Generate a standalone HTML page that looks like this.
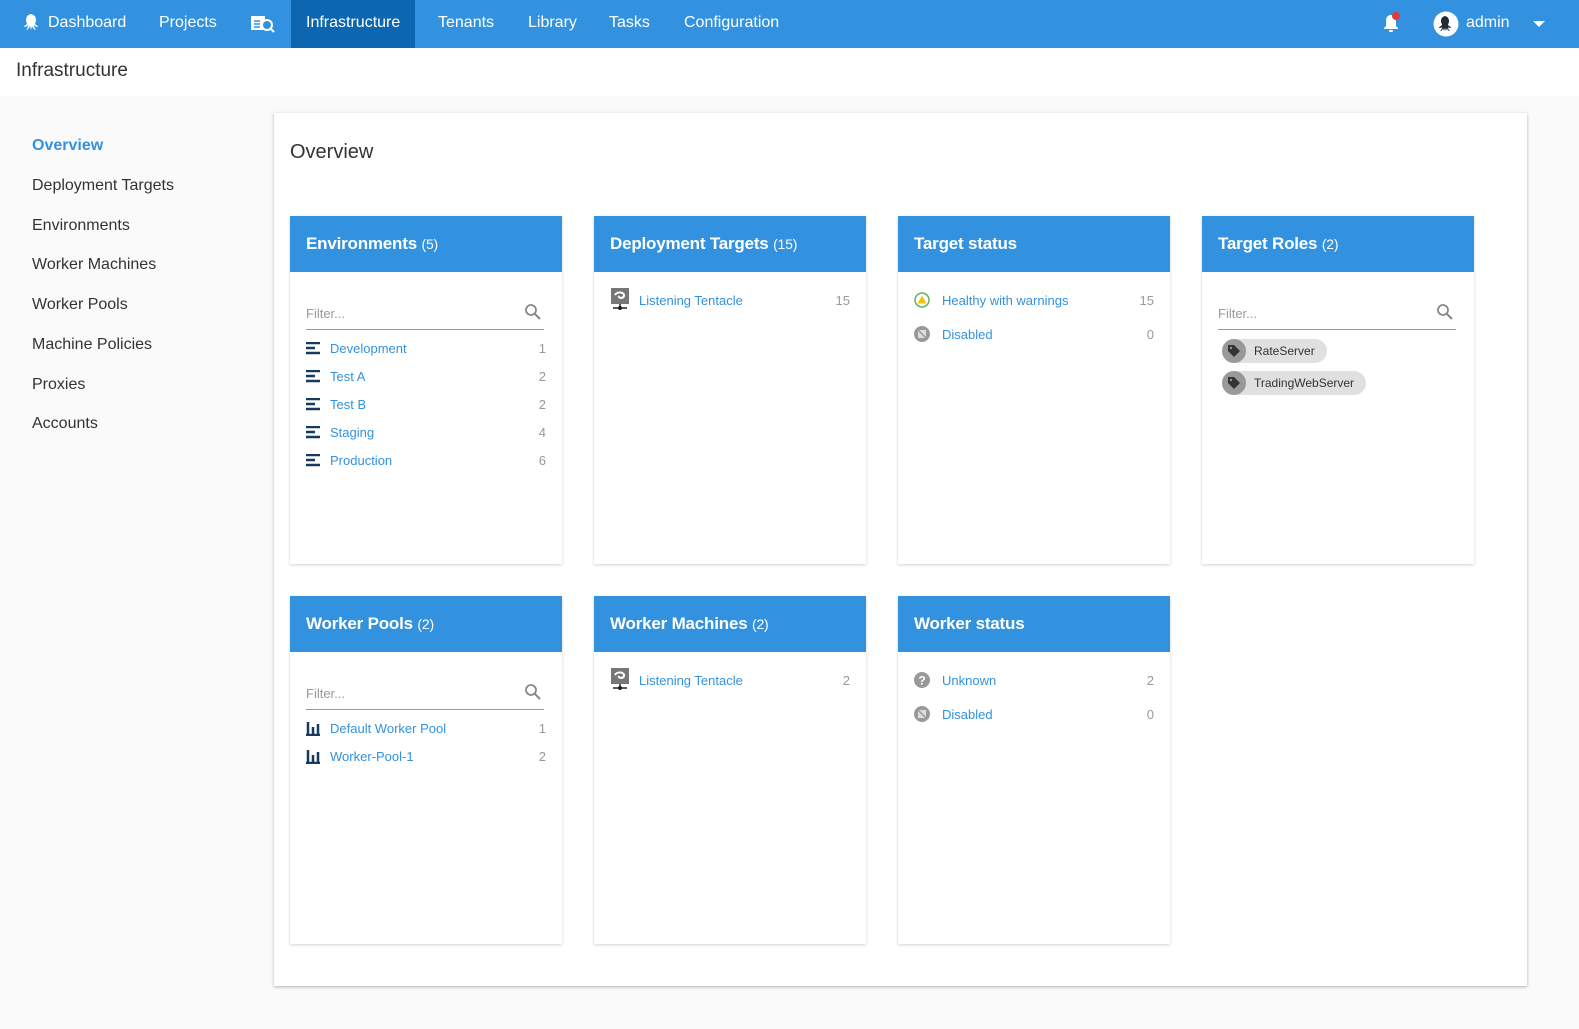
<!DOCTYPE html>
<html><head><meta charset="utf-8"><style>
*{box-sizing:border-box;margin:0;padding:0}
body{width:1579px;height:1029px;background:#fafafa;font-family:"Liberation Sans",sans-serif;position:relative;overflow:hidden}
.nav{position:absolute;left:0;top:0;width:1579px;height:48px;background:#3292df}
.nav span{position:absolute;top:0;height:48px;line-height:46px;color:#fff;font-size:16px}
.act{background:#0d67b0;padding:0 15px}
.hdr{position:absolute;left:0;top:48px;width:1579px;height:48px;background:#fff}
.hdr div{position:absolute;left:16px;top:12px;font-size:19px;color:#333}
.side{position:absolute;left:32px;font-size:16px;color:#333}
.main{position:absolute;left:274px;top:113px;width:1253px;height:873px;background:#fff;box-shadow:0 1px 3px rgba(0,0,0,.3)}
.card{position:absolute;width:272px;height:348px;background:#fff;box-shadow:0 1px 3px rgba(0,0,0,.18)}
.ch{height:56px;background:#3292df;color:#fff;font-size:17px;padding:18px 16px 0;font-weight:bold;letter-spacing:-0.2px}
.ch small{font-size:14px;font-weight:normal}
.filter{position:absolute;left:16px;top:84px;width:238px;height:30px;border-bottom:1px solid #999;color:#999;font-size:13px}
.filter svg{position:absolute;right:2px;top:3px}
.row{position:absolute;left:16px;width:240px;font-size:13px;color:#3292df;height:18px;line-height:18px}
.row .n{position:absolute;right:0;top:0;color:#999}
.row .t{position:absolute;left:24px}
.ic{position:absolute;left:0;top:2px}
.chip{position:absolute;left:20px;height:24px;background:#e0e0e0;border-radius:12px;font-size:12px;color:#333;line-height:24px;padding:0 12px 0 32px}
.chip i{position:absolute;left:0;top:0;width:24px;height:24px;border-radius:12px;background:#999}
.chip svg{position:absolute;left:5px;top:5px}
</style></head><body>
<div class="nav">
<svg style="position:absolute;left:24px;top:14px" width="16" height="18" viewBox="0 0 16 18"><path d="M8 0C4 0 2 3 2 6c0 2 1 3 1 4-1 1-3 2-3 3 2 0 3-1 4-2 0 2-1 4-2 5 2 0 3-2 4-4l1 4 1-4c1 2 2 4 4 4-1-1-2-3-2-5 1 1 2 2 4 2 0-1-2-2-3-3 0-1 1-2 1-4 0-3-2-6-6-6z" fill="#fff"/></svg>
<span style="left:48px">Dashboard</span>
<span style="left:159px">Projects</span>
<svg style="position:absolute;left:251px;top:15px" width="24" height="18" viewBox="0 0 24 18"><rect x="0" y="1" width="14" height="14" fill="#fff"/><circle cx="16" cy="10" r="5" fill="#3292df" stroke="#fff" stroke-width="2"/><path d="M19 13l4 4" stroke="#fff" stroke-width="2"/><path d="M3 6h6M3 9h6M3 12h6" stroke="#3292df" stroke-width="1.5"/></svg>
<span class="act" style="left:291px">Infrastructure</span>
<span style="left:438px">Tenants</span>
<span style="left:528px">Library</span>
<span style="left:609px">Tasks</span>
<span style="left:684px">Configuration</span>
<svg style="position:absolute;left:1381px;top:12px" width="22" height="22" viewBox="0 0 22 22"><path d="M9 3c-3 1-4 3-4 6v5l-2 2v1h14v-1l-2-2V9c0-3-1-5-4-6z" fill="#fff"/><rect x="8" y="18" width="4" height="2" rx="1" fill="#fff"/><circle cx="15" cy="4" r="4" fill="#e53935"/></svg>
<svg style="position:absolute;left:1433px;top:11px" width="26" height="26" viewBox="0 0 26 26"><circle cx="13" cy="13" r="12.5" fill="#fff"/><path d="M13 5c-3 0-5 2-5 5 0 2 1 3 1 4-1 1-3 2-3 3 1 0 2 0 3-1 0 2-1 3-2 4 2 0 3-2 3-3l1 3 1-3 1 3 1-3c0 1 1 3 3 3-1-1-2-2-2-4 1 1 2 1 3 1 0-1-2-2-3-3 0-1 1-2 1-4 0-3-2-5-5-5z" fill="#1e2b38"/></svg>
<span style="left:1466px">admin</span>
<svg style="position:absolute;left:1533px;top:21px" width="12" height="7"><path d="M0 0h12L6 6z" fill="#fff"/></svg>
</div>
<div class="hdr"><div>Infrastructure</div></div>
<div class="side" style="top:137px;color:#3292df;font-weight:bold">Overview</div>
<div class="side" style="top:177px">Deployment Targets</div>
<div class="side" style="top:217px">Environments</div>
<div class="side" style="top:256px">Worker Machines</div>
<div class="side" style="top:296px">Worker Pools</div>
<div class="side" style="top:336px">Machine Policies</div>
<div class="side" style="top:376px">Proxies</div>
<div class="side" style="top:415px">Accounts</div>
<div class="main"><div style="position:absolute;left:16px;top:28px;font-size:20px;color:#333">Overview</div></div>

<div class="card" style="left:290px;top:216px"><div class="ch">Environments <small>(5)</small></div>
<div class="filter"><span style="position:absolute;top:6px">Filter...</span><svg width="18" height="18" viewBox="0 0 18 18"><circle cx="7" cy="7" r="5" fill="none" stroke="#888" stroke-width="1.8"/><path d="M11 11l5 5" stroke="#888" stroke-width="2"/></svg></div>
<div class="row" style="top:124px"><svg class="ic" width="14" height="13"><path d="M0 1h14M0 6h9M0 11h14" stroke="#163b5c" stroke-width="2.5"/></svg><span class="t">Development</span><span class="n">1</span></div>
<div class="row" style="top:152px"><svg class="ic" width="14" height="13"><path d="M0 1h14M0 6h9M0 11h14" stroke="#163b5c" stroke-width="2.5"/></svg><span class="t">Test A</span><span class="n">2</span></div>
<div class="row" style="top:180px"><svg class="ic" width="14" height="13"><path d="M0 1h14M0 6h9M0 11h14" stroke="#163b5c" stroke-width="2.5"/></svg><span class="t">Test B</span><span class="n">2</span></div>
<div class="row" style="top:208px"><svg class="ic" width="14" height="13"><path d="M0 1h14M0 6h9M0 11h14" stroke="#163b5c" stroke-width="2.5"/></svg><span class="t">Staging</span><span class="n">4</span></div>
<div class="row" style="top:236px"><svg class="ic" width="14" height="13"><path d="M0 1h14M0 6h9M0 11h14" stroke="#163b5c" stroke-width="2.5"/></svg><span class="t">Production</span><span class="n">6</span></div>
</div>

<div class="card" style="left:594px;top:216px"><div class="ch">Deployment Targets <small>(15)</small></div>
<div class="row" style="top:76px;left:16px;width:240px"><svg class="ic" style="top:-4px" width="20" height="24" viewBox="0 0 20 24"><rect x="1" y="0" width="18" height="16" fill="#777"/><path d="M5 7c2-4 10-3 9 1-1 3-6 2-5 0" stroke="#fff" stroke-width="2" fill="none"/><path d="M10 16v6M3 20h14" stroke="#222" stroke-width="1.5"/><circle cx="10" cy="20" r="2" fill="#222"/></svg><span class="t" style="left:29px">Listening Tentacle</span><span class="n">15</span></div>
</div>

<div class="card" style="left:898px;top:216px"><div class="ch">Target status</div>
<div class="row" style="top:76px"><svg class="ic" style="top:0" width="16" height="16"><circle cx="8" cy="8" r="7" fill="#fff" stroke="#5bb85d" stroke-width="1.5"/><path d="M8 3.5L12.5 11.5h-9z" fill="#f4c20d"/></svg><span class="t" style="left:28px">Healthy with warnings</span><span class="n">15</span></div>
<div class="row" style="top:110px"><svg class="ic" style="top:0" width="16" height="16"><circle cx="8" cy="8" r="8" fill="#999"/><rect x="4" y="4" width="8" height="8" fill="#ddd"/><path d="M4 4l8 8" stroke="#999" stroke-width="1.5"/></svg><span class="t" style="left:28px">Disabled</span><span class="n">0</span></div>
</div>

<div class="card" style="left:1202px;top:216px"><div class="ch">Target Roles <small>(2)</small></div>
<div class="filter"><span style="position:absolute;top:6px">Filter...</span><svg width="18" height="18" viewBox="0 0 18 18"><circle cx="7" cy="7" r="5" fill="none" stroke="#888" stroke-width="1.8"/><path d="M11 11l5 5" stroke="#888" stroke-width="2"/></svg></div>
<div class="chip" style="top:123px"><i></i><svg width="14" height="14" viewBox="0 0 14 14"><path d="M1 1h6l6 6-6 6-6-6z" fill="#333"/><circle cx="4" cy="4" r="1.2" fill="#999"/></svg>RateServer</div>
<div class="chip" style="top:155px"><i></i><svg width="14" height="14" viewBox="0 0 14 14"><path d="M1 1h6l6 6-6 6-6-6z" fill="#333"/><circle cx="4" cy="4" r="1.2" fill="#999"/></svg>TradingWebServer</div>
</div>

<div class="card" style="left:290px;top:596px"><div class="ch">Worker Pools <small>(2)</small></div>
<div class="filter"><span style="position:absolute;top:6px">Filter...</span><svg width="18" height="18" viewBox="0 0 18 18"><circle cx="7" cy="7" r="5" fill="none" stroke="#888" stroke-width="1.8"/><path d="M11 11l5 5" stroke="#888" stroke-width="2"/></svg></div>
<div class="row" style="top:124px"><svg class="ic" width="14" height="14"><path d="M2 0v14M7 5v9M12 2v12M0 13h14" stroke="#163b5c" stroke-width="2.5"/></svg><span class="t">Default Worker Pool</span><span class="n">1</span></div>
<div class="row" style="top:152px"><svg class="ic" width="14" height="14"><path d="M2 0v14M7 5v9M12 2v12M0 13h14" stroke="#163b5c" stroke-width="2.5"/></svg><span class="t">Worker-Pool-1</span><span class="n">2</span></div>
</div>

<div class="card" style="left:594px;top:596px"><div class="ch">Worker Machines <small>(2)</small></div>
<div class="row" style="top:76px"><svg class="ic" style="top:-4px" width="20" height="24" viewBox="0 0 20 24"><rect x="1" y="0" width="18" height="16" fill="#777"/><path d="M5 7c2-4 10-3 9 1-1 3-6 2-5 0" stroke="#fff" stroke-width="2" fill="none"/><path d="M10 16v6M3 20h14" stroke="#222" stroke-width="1.5"/><circle cx="10" cy="20" r="2" fill="#222"/></svg><span class="t" style="left:29px">Listening Tentacle</span><span class="n">2</span></div>
</div>

<div class="card" style="left:898px;top:596px"><div class="ch">Worker status</div>
<div class="row" style="top:76px"><svg class="ic" style="top:0" width="16" height="16"><circle cx="8" cy="8" r="8" fill="#999"/><text x="8" y="12.5" font-size="12" font-weight="bold" text-anchor="middle" fill="#fff" font-family="Liberation Sans">?</text></svg><span class="t" style="left:28px">Unknown</span><span class="n">2</span></div>
<div class="row" style="top:110px"><svg class="ic" style="top:0" width="16" height="16"><circle cx="8" cy="8" r="8" fill="#999"/><rect x="4" y="4" width="8" height="8" fill="#ddd"/><path d="M4 4l8 8" stroke="#999" stroke-width="1.5"/></svg><span class="t" style="left:28px">Disabled</span><span class="n">0</span></div>
</div>
</body></html>
